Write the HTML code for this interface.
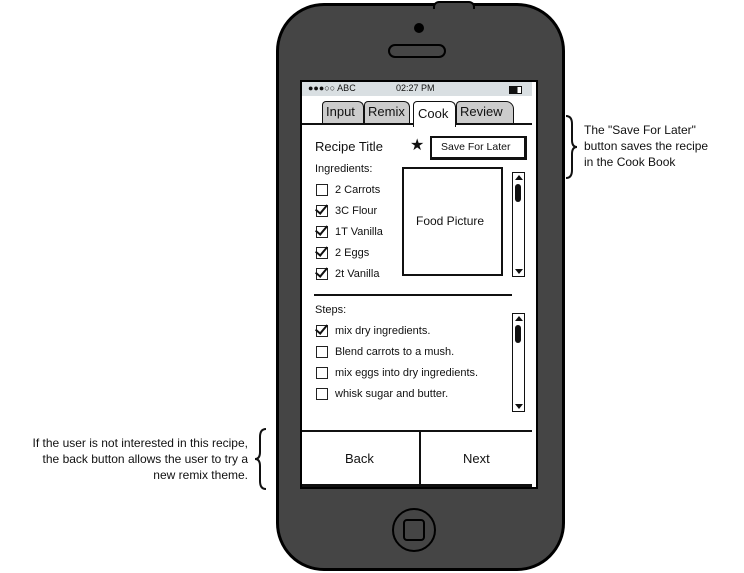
<!DOCTYPE html>
<html><head><style>
body{margin:0;width:744px;height:573px;background:#fff;position:relative;overflow:hidden;font-family:"Liberation Sans",sans-serif;color:#111}
.a{position:absolute}
.t{font-size:11px;white-space:nowrap}
.cb{position:absolute;width:10px;height:10px;border:1.5px solid #222;background:#fff}
.ck::after{content:"";position:absolute;left:1px;top:-4px;width:5px;height:10px;border-right:2px solid #111;border-bottom:2px solid #111;transform:rotate(40deg)}
.sb{position:absolute;width:11px;border:1.5px solid #111;background:#fff}
.up{position:absolute;left:2px;top:2px;width:0;height:0;border-left:4px solid transparent;border-right:4px solid transparent;border-bottom:5px solid #111}
.dn{position:absolute;left:2px;bottom:2px;width:0;height:0;border-left:4px solid transparent;border-right:4px solid transparent;border-top:5px solid #111}
</style></head><body>
<div class="a" style="left:276px;top:3px;width:283px;height:562px;background:#454545;border:3px solid #000;border-radius:48px"></div>
<div class="a" style="left:433px;top:1px;width:38px;height:6px;background:#454545;border:2px solid #000;border-bottom:none;border-radius:6px 6px 0 0"></div>
<div class="a" style="left:414px;top:23px;width:10px;height:10px;background:#000;border-radius:50%"></div>
<div class="a" style="left:388px;top:44px;width:54px;height:10px;border:2px solid #000;border-radius:8px"></div>
<div class="a" style="left:392px;top:508px;width:40px;height:40px;border:2px solid #000;border-radius:50%"></div>
<div class="a" style="left:403px;top:519px;width:18px;height:18px;border:2px solid #000;border-radius:4px"></div>
<div class="a" style="left:300px;top:80px;width:234px;height:405px;background:#fff;border:2px solid #000"></div>
<div class="a" style="left:302px;top:82px;width:230px;height:14px;background:#d9dfe2"></div>
<div class="a t" style="left:308px;top:83px;font-size:9px">●●●○○ ABC</div>
<div class="a t" style="left:396px;top:83px;font-size:9px">02:27 PM</div>
<div class="a" style="left:509px;top:86px;width:11px;height:6px;border:1.5px solid #111;background:linear-gradient(90deg,#111 70%,#fff 70%)"></div>
<div class="a" style="left:322px;top:101px;width:40px;height:22px;background:#ccc;border:1.5px solid #111;border-bottom:none;border-radius:4px 6px 0 0"></div>
<div class="a t" style="left:326px;top:104px;font-size:13px">Input</div>
<div class="a" style="left:364px;top:101px;width:44px;height:22px;background:#ccc;border:1.5px solid #111;border-bottom:none;border-radius:4px 6px 0 0"></div>
<div class="a t" style="left:368px;top:104px;font-size:13px">Remix</div>
<div class="a" style="left:456px;top:101px;width:56px;height:22px;background:#ccc;border:1.5px solid #111;border-bottom:none;border-radius:4px 8px 0 0"></div>
<div class="a t" style="left:460px;top:104px;font-size:13px">Review</div>
<div class="a" style="left:302px;top:123px;width:230px;height:1.5px;background:#111"></div>
<div class="a" style="left:413px;top:101px;width:41px;height:25px;background:#fff;border:1.5px solid #111;border-bottom:none;border-radius:4px 6px 0 0"></div>
<div class="a t" style="left:418px;top:106px;font-size:13px">Cook</div>
<div class="a t" style="left:315px;top:139px;font-size:13px">Recipe Title</div>
<div class="a" style="left:410px;top:135px;font-size:16px">★</div>
<div class="a" style="left:430px;top:136px;width:92px;height:19px;border:2px solid #111;border-right-width:3px;border-bottom-width:3px;background:#fff"></div>
<div class="a t" style="left:441px;top:141px;font-size:10.5px">Save For Later</div>
<div class="a t" style="left:315px;top:163px">Ingredients:</div>
<div class="cb" style="left:316px;top:184px"></div><div class="a t" style="left:335px;top:184px">2 Carrots</div>
<div class="cb ck" style="left:316px;top:205px"></div><div class="a t" style="left:335px;top:205px">3C Flour</div>
<div class="cb ck" style="left:316px;top:226px"></div><div class="a t" style="left:335px;top:226px">1T Vanilla</div>
<div class="cb ck" style="left:316px;top:247px"></div><div class="a t" style="left:335px;top:247px">2 Eggs</div>
<div class="cb ck" style="left:316px;top:268px"></div><div class="a t" style="left:335px;top:268px">2t Vanilla</div>
<div class="a" style="left:402px;top:167px;width:97px;height:105px;border:2.5px solid #111"></div>
<div class="a t" style="left:416px;top:214px;font-size:12px">Food Picture</div>
<div class="sb" style="left:512px;top:172px;height:103px"><div class="up"></div><div class="dn"></div></div>
<div class="a" style="left:515px;top:184px;width:6px;height:18px;background:#111;border-radius:3px"></div>
<div class="a" style="left:314px;top:294px;width:198px;height:1.5px;background:#111"></div>
<div class="a t" style="left:315px;top:304px">Steps:</div>
<div class="cb ck" style="left:316px;top:325px"></div><div class="a t" style="left:335px;top:325px">mix dry ingredients.</div>
<div class="cb" style="left:316px;top:346px"></div><div class="a t" style="left:335px;top:346px">Blend carrots to a mush.</div>
<div class="cb" style="left:316px;top:367px"></div><div class="a t" style="left:335px;top:367px">mix eggs into dry ingredients.</div>
<div class="cb" style="left:316px;top:388px"></div><div class="a t" style="left:335px;top:388px">whisk sugar and butter.</div>
<div class="sb" style="left:512px;top:313px;height:97px"><div class="up"></div><div class="dn"></div></div>
<div class="a" style="left:515px;top:325px;width:6px;height:18px;background:#111;border-radius:3px"></div>
<div class="a" style="left:302px;top:430px;width:230px;height:1.5px;background:#111"></div>
<div class="a" style="left:419px;top:430px;width:1.5px;height:54px;background:#111"></div>
<div class="a" style="left:302px;top:484px;width:230px;height:3px;background:#111"></div>
<div class="a t" style="left:345px;top:451px;font-size:13px">Back</div>
<div class="a t" style="left:463px;top:451px;font-size:13px">Next</div>
<svg class="a" style="left:560px;top:114px" width="20" height="66"><path d="M6 2 Q12 2 12 10 L12 26 Q12 33 17 33 Q12 33 12 40 L12 56 Q12 64 6 64" fill="none" stroke="#111" stroke-width="2"/></svg>
<div class="a t" style="left:584px;top:122px;font-size:12px;line-height:16px">The "Save For Later"<br>button saves the recipe<br>in the Cook Book</div>
<svg class="a" style="left:252px;top:427px" width="20" height="64"><path d="M14 2 Q8 2 8 10 L8 25 Q8 32 3 32 Q8 32 8 39 L8 54 Q8 62 14 62" fill="none" stroke="#111" stroke-width="2"/></svg>
<div class="a t" style="left:4px;top:435px;width:244px;text-align:right;font-size:12px;line-height:16px">If the user is not interested in this recipe,<br>the back button allows the user to try a<br>new remix theme.</div>
</body></html>
